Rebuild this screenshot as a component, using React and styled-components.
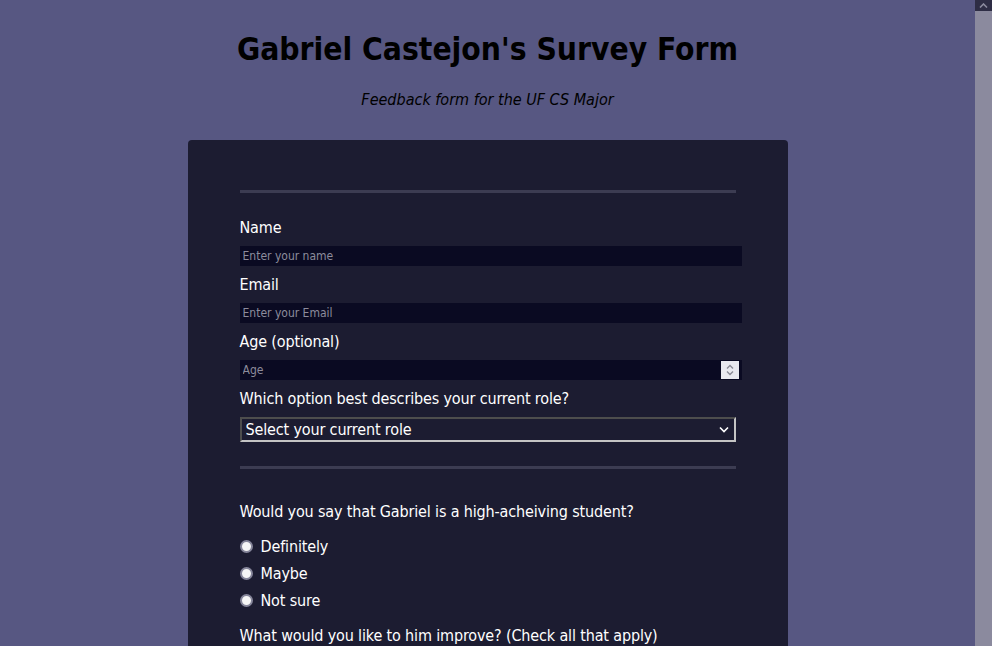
import React from 'react';
import styled, { createGlobalStyle } from 'styled-components';

const GlobalStyle = createGlobalStyle`
    html, body {
        margin: 0;
        height: 100%;
        overflow: hidden;
        background: #575782;
    }

    body {
        font-family: "DejaVu Sans Condensed", "DejaVu Sans", sans-serif;
        font-stretch: condensed;
    }
`;

const Page = styled.div`
    display: flex;
    height: 100vh;
    background: #575782;
`;

const Main = styled.main`
    flex: 1;
    overflow-y: auto;
    scrollbar-width: none;

    &::-webkit-scrollbar {
        display: none;
    }
`;

const ScrollBar = styled.div`
    width: 17px;
    flex: none;
    display: flex;
    flex-direction: column;
    background: #8b8a9e;
`;

const ScrollButton = styled.div`
    height: 11px;
    background: #2e2d45;
    display: flex;
    align-items: center;
    justify-content: center;
`;

const Inner = styled.div`
    padding: 30px 0 60px;
`;

const Header = styled.header`
    text-align: center;
    color: #000;
`;

const Title = styled.h1`
    margin: 0;
    font-size: 31.5px;
    line-height: 38px;
    font-weight: bold;
`;

const Subtitle = styled.p`
    margin: 22px 0 0;
    font-size: 16px;
    font-style: italic;
`;

const Card = styled.form`
    width: 600px;
    box-sizing: border-box;
    margin: 31px auto 0;
    padding: 50px 52px 40px;
    background: #1c1c31;
    border-radius: 4px;
    color: #fff;
    font-size: 16px;
    letter-spacing: -0.15px;
`;

const Rule = styled.div`
    height: 3px;
    background: #3c3c52;
    margin: ${({ $after }) => $after}px 0 0;
`;

const Label = styled.label`
    display: block;
    line-height: 19px;
    margin: ${({ $top }) => $top ?? 9}px 0 9px;
`;

const Field = styled.div`
    position: relative;
    width: 502px;
`;

const Input = styled.input`
    display: block;
    width: 100%;
    height: 20px;
    padding: 0 3px;
    box-sizing: border-box;
    border: none;
    background: #0a0a22;
    color: #fff;
    font-family: inherit;
    font-size: 12px;
    outline: none;
    appearance: textfield;

    &::placeholder {
        color: #8c8c9c;
    }

    &::-webkit-inner-spin-button,
    &::-webkit-outer-spin-button {
        -webkit-appearance: none;
        margin: 0;
    }
`;

const Spinner = styled.div`
    position: absolute;
    right: 3px;
    top: 1px;
    width: 18px;
    height: 18px;
    background: #e9e9f0;
    display: flex;
    align-items: center;
    justify-content: center;
    pointer-events: none;
`;

const SelectWrap = styled.div`
    position: relative;
    width: 496px;
`;

const Select = styled.select`
    display: block;
    width: 100%;
    height: 25px;
    padding: 0 4px;
    appearance: none;
    border: 2px solid #c4c4c4;
    border-top-color: #4d4d4d;
    border-left-color: #4d4d4d;
    border-radius: 0;
    background: #1c1c31;
    color: #fff;
    font-family: inherit;
    font-size: 16px;
    letter-spacing: -0.15px;
    outline: none;
`;

const Chevron = styled.svg`
    position: absolute;
    right: 7px;
    top: 9px;
    pointer-events: none;
`;

const Question = styled.p`
    margin: 33px 0 0;
    line-height: 19px;
`;

const ChoiceList = styled.div`
    display: flex;
    flex-direction: column;
    gap: 8px;
    margin-top: ${({ $top }) => $top}px;
`;

const Choice = styled.label`
    display: flex;
    align-items: center;
    gap: 8px;
    line-height: 19px;
`;

const Radio = styled.input`
    appearance: none;
    margin: 0;
    width: 13px;
    height: 13px;
    border-radius: 50%;
    border: 2px solid #85859a;
    background: #f6f6f6;
    box-sizing: border-box;
`;

const Check = styled.input`
    appearance: none;
    margin: 0;
    width: 13px;
    height: 13px;
    border-radius: 2px;
    border: 1px solid #7a7a86;
    background: #f4f4f4;
`;

const SubQuestion = styled.p`
    margin: 16px 0 0;
    line-height: 19px;
`;

const Comments = styled.textarea`
    display: block;
    width: 100%;
    height: 90px;
    margin-top: 12px;
    box-sizing: border-box;
    border: none;
    background: #0a0a22;
    color: #fff;
    font-family: inherit;
    font-size: 12px;
    padding: 4px;
`;

const Submit = styled.button`
    display: block;
    width: 100%;
    margin-top: 24px;
    height: 36px;
    border: none;
    border-radius: 3px;
    background: #575782;
    color: #fff;
    font-family: inherit;
    font-size: 16px;
`;

const fields = [
    { id: 'name', label: 'Name', type: 'text', placeholder: 'Enter your name' },
    { id: 'email', label: 'Email', type: 'email', placeholder: 'Enter your Email' },
    { id: 'age', label: 'Age (optional)', type: 'number', placeholder: 'Age' },
];

const ratings = ['Definitely', 'Maybe', 'Not sure'];
const improvements = ['Time management', 'Communication', 'Coding style', 'Testing'];

const App = () => {
    return (
        <Page>
            <GlobalStyle />
            <Main>
                <Inner>
                    <Header>
                        <Title>Gabriel Castejon's Survey Form</Title>
                        <Subtitle>Feedback form for the UF CS Major</Subtitle>
                    </Header>
                    <Card onSubmit={(e) => e.preventDefault()}>
                        <Rule $after={0} />
                        {fields.map((f, i) => (
                            <React.Fragment key={f.id}>
                                <Label htmlFor={f.id} $top={i === 0 ? 25 : 9}>{f.label}</Label>
                                <Field>
                                    <Input id={f.id} type={f.type} placeholder={f.placeholder} />
                                    {f.type === 'number' && (
                                        <Spinner>
                                            <svg width="10" height="14" viewBox="0 0 10 14" fill="none" stroke="#8a8a96" strokeWidth="1.4">
                                                <path d="M2 5.5 L5 2.5 L8 5.5" />
                                                <path d="M2 8.5 L5 11.5 L8 8.5" />
                                            </svg>
                                        </Spinner>
                                    )}
                                </Field>
                            </React.Fragment>
                        ))}
                        <Label htmlFor="role">Which option best describes your current role?</Label>
                        <SelectWrap>
                            <Select id="role" defaultValue="">
                                <option value="" disabled>Select your current role</option>
                                <option>Student</option>
                                <option>Professor</option>
                                <option>Other</option>
                            </Select>
                            <Chevron width="10" height="7" viewBox="0 0 10 7" fill="none" stroke="#fff" strokeWidth="1.6">
                                <path d="M1 1.5 L5 5.5 L9 1.5" />
                            </Chevron>
                        </SelectWrap>
                        <Rule $after={24} />
                        <Question>Would you say that Gabriel is a high-acheiving student?</Question>
                        <ChoiceList $top={16}>
                            {ratings.map((r) => (
                                <Choice key={r}>
                                    <Radio type="radio" name="rating" />
                                    {r}
                                </Choice>
                            ))}
                        </ChoiceList>
                        <SubQuestion>What would you like to him improve? (Check all that apply)</SubQuestion>
                        <ChoiceList $top={16}>
                            {improvements.map((r) => (
                                <Choice key={r}>
                                    <Check type="checkbox" />
                                    {r}
                                </Choice>
                            ))}
                        </ChoiceList>
                        <SubQuestion>Any comments or suggestions?</SubQuestion>
                        <Comments placeholder="Enter your comment here..." />
                        <Submit type="submit">Submit</Submit>
                    </Card>
                </Inner>
            </Main>
            <ScrollBar>
                <ScrollButton>
                    <svg width="9" height="5" viewBox="0 0 9 5" fill="none" stroke="#8b8a9e" strokeWidth="1.6">
                        <path d="M1 4.5 L4.5 1 L8 4.5" />
                    </svg>
                </ScrollButton>
            </ScrollBar>
        </Page>
    );
};

export default App;
